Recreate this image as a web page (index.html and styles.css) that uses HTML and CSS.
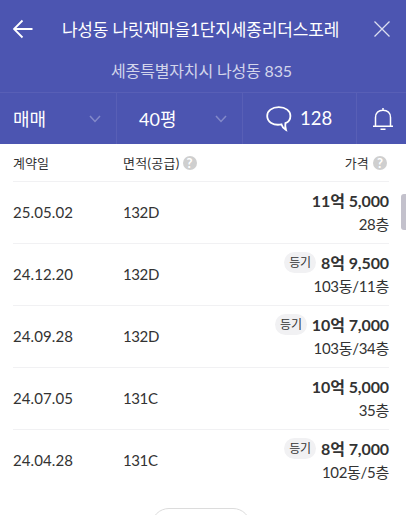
FILE: index.html
```
<!DOCTYPE html>
<html lang="ko">

<head>
    <meta charset="utf-8">
    <meta name="viewport" content="width=device-width, initial-scale=1.0">
    <title>나릿재마을1단지세종리더스포레</title>
    <link rel="stylesheet" href="styles.css">
</head>

<body>
    <!-- 상단 헤더 -->
    <div id="header">
        <div class="title-bar">
            <svg class="icon-back" width="20" height="20" viewBox="0 0 20 20"><path d="M9.5 1.5 L1 10 L9.5 18.5 M1 10 H19.5"/></svg>
            <h1>나성동 나릿재마을1단지세종리더스포레</h1>
            <svg class="icon-close" width="16" height="16" viewBox="0 0 16 16"><path d="M0.5 0.5 L15.5 15.5 M15.5 0.5 L0.5 15.5"/></svg>
        </div>
        <p class="address">세종특별자치시 나성동 835</p>
    </div>

    <!-- 필터 탭 -->
    <div id="menu">
        <div class="tab tab-trade">
            <span>매매</span>
            <svg class="arrow" width="12" height="8" viewBox="0 0 12 8"><path d="M1 1 L6 6.5 L11 1"/></svg>
        </div>
        <div class="tab tab-size">
            <span>40평</span>
            <svg class="arrow" width="12" height="8" viewBox="0 0 12 8"><path d="M1 1 L6 6.5 L11 1"/></svg>
        </div>
        <div class="tab tab-talk">
            <svg class="icon-talk" width="26" height="26" viewBox="0 0 26 26"><path d="M15.5 18.4 C7 20 1.2 15.6 1.2 9.9 C1.2 4.8 6 1.2 12.8 1.2 C19.6 1.2 24.4 4.8 24.4 9.9 C24.4 13.2 22.8 15.8 19.4 17.2 C19 19.6 19.3 21.8 20 24 C17.8 22.9 16.2 20.8 15.5 18.4 Z"/></svg>
            <span>128</span>
        </div>
        <div class="tab tab-bell">
            <svg class="icon-bell" width="20" height="22" viewBox="0 0 20 22"><path d="M0 18.3 H20 M2.5 18.3 V9.5 C2.5 5 5.6 2.2 10 2.2 C14.4 2.2 17.5 5 17.5 9.5 V18.3 M10 0 V2.2 M7.5 21.3 H12.5"/></svg>
        </div>
    </div>

    <!-- 실거래 목록 -->
    <div id="content">
        <div class="row row-head">
            <div class="date">계약일</div>
            <div class="area">면적(공급)<span class="help">?</span></div>
            <div class="price-head">가격<span class="help">?</span></div>
        </div>
        <div class="row">
            <div class="date">25.05.02</div>
            <div class="area">132D</div>
            <div class="price"><div class="amount"><b>11억 5,000</b></div><div class="floor">28층</div></div>
        </div>
        <div class="row">
            <div class="date">24.12.20</div>
            <div class="area">132D</div>
            <div class="price"><div class="amount"><span class="badge">등기</span><b>8억 9,500</b></div><div class="floor">103동/11층</div></div>
        </div>
        <div class="row">
            <div class="date">24.09.28</div>
            <div class="area">132D</div>
            <div class="price"><div class="amount"><span class="badge">등기</span><b>10억 7,000</b></div><div class="floor">103동/34층</div></div>
        </div>
        <div class="row">
            <div class="date">24.07.05</div>
            <div class="area">131C</div>
            <div class="price"><div class="amount"><b>10억 5,000</b></div><div class="floor">35층</div></div>
        </div>
        <div class="row">
            <div class="date">24.04.28</div>
            <div class="area">131C</div>
            <div class="price"><div class="amount"><span class="badge">등기</span><b>8억 7,000</b></div><div class="floor">102동/5층</div></div>
        </div>
        <div class="more"></div>
    </div>

    <!-- 스크롤바 -->
    <div class="scroll-thumb"></div>
</body>

</html>
```
FILE: styles.css
```
* {
    box-sizing: border-box;
}

body {
    margin: 0;
    height: 515px;
    overflow: hidden;
    position: relative;
    background-color: #fff;
    color: #333;
    font-family: Lato, "Noto Sans CJK KR", sans-serif;
    font-size: 15px;
}

svg {
    display: block;
    fill: none;
    stroke: #fff;
}

/* 헤더 */
#header {
    height: 92px;
    background-color: #4c55b1;
    color: #fff;
}

.title-bar {
    display: flex;
    align-items: center;
    justify-content: space-between;
    height: 57px;
    padding: 0 16px 0 13px;
}

.title-bar h1 {
    margin: 3px 6px 0 0;
    font-size: 17px;
    font-weight: 400;
    line-height: 24px;
    letter-spacing: -0.15px;
    white-space: nowrap;
}

.icon-back {
    stroke-width: 1.8;
}

.icon-close {
    stroke-width: 1.3;
    stroke: #dcdef0;
}

.address {
    margin: 0;
    padding: 2px 3px 0 0;
    line-height: 24px;
    font-size: 16px;
    letter-spacing: -0.15px;
    text-align: center;
    color: #d3d5eb;
}

/* 탭 */
#menu {
    display: flex;
    height: 52px;
    background-color: #4c55b1;
    border-top: 1px solid #585fb6;
    color: #fff;
    font-size: 18px;
}

.tab {
    display: flex;
    align-items: center;
    justify-content: space-between;
    border-right: 1px solid #585fb6;
}

.tab span {
    margin-top: -2px;
}

.tab-trade {
    width: 117px;
    padding: 0 15px 0 13px;
}

.tab-size {
    width: 126px;
    padding: 0 15px 0 22px;
}

.tab-talk {
    width: 114px;
    padding-left: 23px;
    justify-content: flex-start;
    gap: 8px;
    font-size: 18.5px;
}

.tab-bell {
    width: 49px;
    padding-left: 16px;
    border-right: none;
}

.arrow {
    stroke: #8389c9;
    stroke-width: 1.5;
}

.icon-talk {
    stroke-width: 1.8;
}

.icon-bell {
    stroke-width: 1.5;
}

/* 목록 */
#content {
    height: 371px;
    padding: 0 17px 0 13px;
    overflow: hidden;
}

.row {
    display: flex;
    align-items: center;
    height: 62px;
    padding-bottom: 2px;
    border-bottom: 1px solid #f1f1f3;
}

.row:nth-child(6) {
    height: 61px;
    border-bottom: none;
}

.row-head {
    height: 38px;
    padding-bottom: 0;
    font-size: 13px;
    letter-spacing: 0.2px;
}

.date {
    width: 110px;
    letter-spacing: 0.1px;
}

.area {
    width: 110px;
    display: flex;
    align-items: center;
    letter-spacing: -0.4px;
}

.row-head .area {
    letter-spacing: 0.3px;
}

.price,
.price-head {
    flex: 1;
}

.price-head {
    display: flex;
    align-items: center;
    justify-content: flex-end;
}

.price-head .help {
    margin-left: 4px;
}

.help {
    width: 14px;
    height: 14px;
    margin: 0 2px 0 3px;
    border-radius: 50%;
    background-color: #cfcfcf;
    color: #fff;
    font-size: 13px;
    font-weight: 700;
    line-height: 14px;
    letter-spacing: 0;
    text-align: center;
}

.amount {
    display: flex;
    align-items: center;
    justify-content: flex-end;
    height: 24px;
    font-size: 16px;
    letter-spacing: -0.1px;
}

.amount b {
    margin-top: -2px;
}

.floor {
    line-height: 22px;
    letter-spacing: -0.3px;
    text-align: right;
}

.badge {
    height: 21px;
    margin-right: 5px;
    padding: 0 5px;
    border-radius: 11px;
    background-color: #f1f1f3;
    font-size: 12px;
    line-height: 21px;
}

/* 더보기 버튼 */
.more {
    width: 100px;
    height: 36px;
    margin: 17px auto 0;
    border: 1px solid #dcdcdc;
    border-radius: 18px;
}

.scroll-thumb {
    position: absolute;
    top: 194px;
    right: 0;
    width: 5px;
    height: 36px;
    border-radius: 3px 0 0 3px;
    background-color: #c3c1cc;
}
```
